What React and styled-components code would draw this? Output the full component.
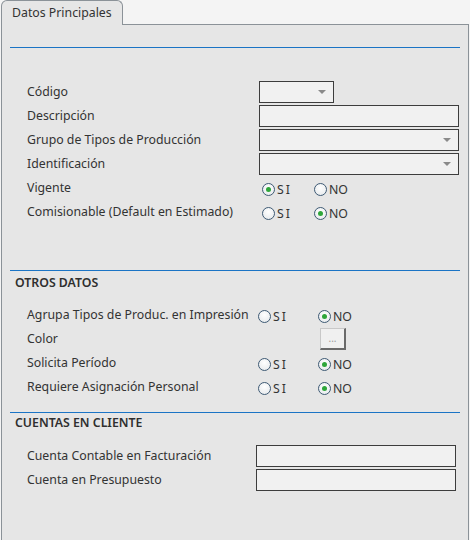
import styled, { createGlobalStyle } from 'styled-components';

const Global = createGlobalStyle`
    html, body {
        margin: 0;
        padding: 0;
        background: #f4f4f4;
        font-family: "Noto Sans", "Liberation Sans", sans-serif;
        font-size: 12.3px;
        color: #333;
    }
`;

const Page = styled.div`
    width: 470px;
    height: 540px;
    overflow: hidden;
    padding-left: 1px;
    box-sizing: border-box;
`;

const TabBar = styled.div`
    display: flex;
    height: 24px;
`;

const Tab = styled.div`
    width: 122px;
    height: 25px;
    box-sizing: border-box;
    border: 1px solid #8b9298;
    border-bottom: none;
    border-radius: 6px 6px 0 0;
    background: #e6e6e6;
    padding: 3px 0 0 10px;
    position: relative;
    z-index: 1;
`;

const Panel = styled.div`
    width: 468px;
    height: 530px;
    box-sizing: border-box;
    border: 1px solid #8b9298;
    background: #e6e6e6;
    padding: 22px 0 0 8px;
`;

const Line = styled.div`
    width: 450px;
    height: 1px;
    background: #1b74c5;
`;

const SectionTitle = styled.div`
    font-weight: 600;
    padding: ${p => p.$top ?? 3}px 0 0 5px;
    height: ${p => 22 - (p.$top ?? 3)}px;
    color: #2f2f2f;
`;

const Rows = styled.div`
    padding: ${p => p.$top}px 0 ${p => p.$bottom}px 17px;
`;

const Row = styled.div`
    display: grid;
    grid-template-columns: ${p => p.$label || 232}px 1fr;
    align-items: center;
    height: 24px;
`;

const Label = styled.div`
    margin-top: -2px;
    white-space: nowrap;
`;

const Field = styled.div`
    position: relative;
    width: ${p => p.$w}px;
    height: 22px;
    box-sizing: border-box;
    border: 1px solid #3d3d3d;
    background: #f1f1f1;
`;

const Arrow = styled.span`
    position: absolute;
    right: 7px;
    top: 8px;
    width: 0;
    height: 0;
    border-left: 4px solid transparent;
    border-right: 4px solid transparent;
    border-top: 4px solid #8a8a8a;
`;

const RadioGroup = styled.div`
    display: flex;
    align-items: center;
    padding-left: ${p => p.$pad}px;
    margin-top: 2px;
`;

const Option = styled.label`
    display: flex;
    align-items: center;
    width: ${p => p.$w}px;
`;

const Circle = styled.span`
    width: 13px;
    height: 13px;
    box-sizing: border-box;
    border-radius: 50%;
    border: 1px solid #3e5a74;
    background: radial-gradient(circle at 50% 35%, #ffffff, #e3e7ea);
    display: flex;
    align-items: center;
    justify-content: center;
    margin-right: 2px;
`;

const Dot = styled.span`
    width: 5px;
    height: 5px;
    border-radius: 50%;
    background: #2ea63a;
`;

const OptText = styled.span`
    letter-spacing: ${p => p.$ls || 0}px;
    margin-top: 1px;
`;

const DotsButton = styled.button`
    margin-left: ${p => p.$ml}px;
    width: 26px;
    height: 22px;
    box-sizing: border-box;
    border: 1px solid #c8c8c8;
    border-right: 2px solid #6a6a6a;
    border-bottom: 2px solid #6a6a6a;
    background: #f0f0f0;
    color: #9a9a9a;
    font-family: "Noto Sans", sans-serif;
    font-size: 10px;
    padding: 0 0 2px;
    line-height: 1;
`;

const Radios = ({ value, pad, gap }) => (
    <RadioGroup $pad={pad}>
        <Option $w={gap}>
            <Circle>{value === 'SI' && <Dot />}</Circle>
            <OptText $ls={2}>SI</OptText>
        </Option>
        <Option>
            <Circle>{value === 'NO' && <Dot />}</Circle>
            <OptText>NO</OptText>
        </Option>
    </RadioGroup>
);

const App = () => (
    <Page>
        <Global />
        <TabBar>
            <Tab>Datos Principales</Tab>
        </TabBar>
        <Panel>
            <Line />
            <Rows $top={32} $bottom={46}>
                <Row>
                    <Label>Código</Label>
                    <Field $w={75}><Arrow /></Field>
                </Row>
                <Row>
                    <Label>Descripción</Label>
                    <Field $w={200} />
                </Row>
                <Row>
                    <Label>Grupo de Tipos de Producción</Label>
                    <Field $w={200}><Arrow /></Field>
                </Row>
                <Row>
                    <Label>Identificación</Label>
                    <Field $w={200}><Arrow /></Field>
                </Row>
                <Row>
                    <Label>Vigente</Label>
                    <Radios value="SI" pad={3} gap={52} />
                </Row>
                <Row>
                    <Label>Comisionable (Default en Estimado)</Label>
                    <Radios value="NO" pad={3} gap={52} />
                </Row>
            </Rows>

            <Line />
            <SectionTitle>OTROS DATOS</SectionTitle>
            <Rows $top={10} $bottom={13}>
                <Row $label={231}>
                    <Label>Agrupa Tipos de Produc. en Impresión</Label>
                    <Radios value="NO" pad={0} gap={60} />
                </Row>
                <Row $label={231}>
                    <Label>Color</Label>
                    <div><DotsButton $ml={62}>...</DotsButton></div>
                </Row>
                <Row $label={231}>
                    <Label>Solicita Período</Label>
                    <Radios value="NO" pad={0} gap={60} />
                </Row>
                <Row $label={231}>
                    <Label>Requiere Asignación Personal</Label>
                    <Radios value="NO" pad={0} gap={60} />
                </Row>
            </Rows>

            <Line />
            <SectionTitle $top={1}>CUENTAS EN CLIENTE</SectionTitle>
            <Rows $top={9} $bottom={0}>
                <Row $label={229}>
                    <Label>Cuenta Contable en Facturación</Label>
                    <Field $w={200} />
                </Row>
                <Row $label={229}>
                    <Label>Cuenta en Presupuesto</Label>
                    <Field $w={200} />
                </Row>
            </Rows>
        </Panel>
    </Page>
);

export default App;
